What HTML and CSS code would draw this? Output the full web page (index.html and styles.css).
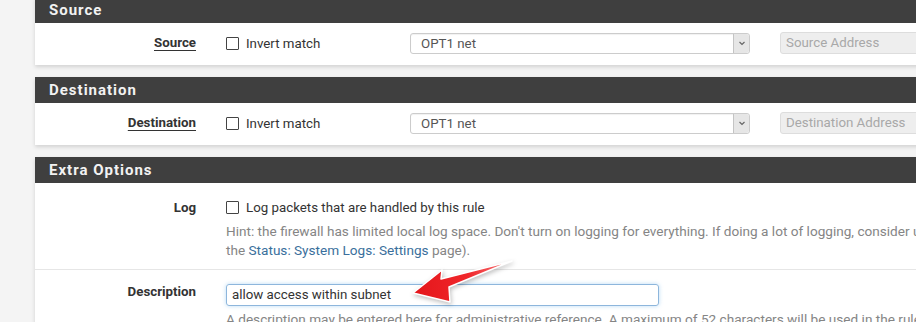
FILE: index.html
```html
<!doctype html>
<html>

<head>
    <meta charset="utf-8">
    <title>Edit Firewall Rule</title>
    <meta name="viewport" content="width=device-width,initial-scale=1">
    <link rel="stylesheet" href="styles.css">
</head>

<body>
    <div class="page">
        <div class="panel panel-first">
            <div class="panel-heading">Source</div>
            <div class="panel-body">
                <div class="row">
                    <div class="label"><span class="ul">Source</span></div>
                    <div class="field addr">
                        <label class="check"><span class="box"></span>Invert match</label>
                        <div class="select">
                            <span>OPT1 net</span>
                            <span class="caret">
                                <svg viewBox="0 0 10 10" aria-hidden="true"><path d="M2.5 4l2.5 2.5L7.5 4" /></svg>
                            </span>
                        </div>
                        <div class="input disabled">Source Address</div>
                    </div>
                </div>
            </div>
        </div>

        <div class="panel">
            <div class="panel-heading">Destination</div>
            <div class="panel-body">
                <div class="row">
                    <div class="label"><span class="ul">Destination</span></div>
                    <div class="field addr">
                        <label class="check"><span class="box"></span>Invert match</label>
                        <div class="select">
                            <span>OPT1 net</span>
                            <span class="caret">
                                <svg viewBox="0 0 10 10" aria-hidden="true"><path d="M2.5 4l2.5 2.5L7.5 4" /></svg>
                            </span>
                        </div>
                        <div class="input disabled">Destination Address</div>
                    </div>
                </div>
            </div>
        </div>

        <div class="panel">
            <div class="panel-heading">Extra Options</div>
            <div class="panel-body">
                <div class="row row-log">
                    <div class="label">Log</div>
                    <div class="field">
                        <label class="check"><span class="box"></span>Log packets that are handled by this rule</label>
                        <p class="help">Hint: the firewall has limited local log space. Don't turn on logging for everything. If doing a lot of logging, consider using a remote syslog server (see<br>the <a href="#">Status: System Logs: Settings</a> page).</p>
                    </div>
                </div>
                <div class="row row-desc">
                    <div class="label">Description</div>
                    <div class="field">
                        <div class="input focus">allow access within subnet</div>
                        <p class="help">A description may be entered here for administrative reference. A maximum of 52 characters will be used in the ruleset and displayed in the firewall log.</p>
                    </div>
                    <!-- annotation arrow drawn over the form -->
                    <svg class="arrow" viewBox="0 0 140 60" aria-hidden="true">
                        <defs>
                            <linearGradient id="red" x1="0" y1="0" x2="1" y2="0">
                                <stop offset="0" stop-color="#e4161b" />
                                <stop offset="0.55" stop-color="#f0262a" />
                                <stop offset="1" stop-color="#f77a7c" />
                            </linearGradient>
                        </defs>
                        <polygon points="23,41 52,18 51,27 122,9 59,35 60,50" fill="url(#red)" stroke="#fff" stroke-width="1.5" stroke-linejoin="round" />
                    </svg>
                </div>
            </div>
        </div>
    </div>
</body>

</html>
```

FILE: styles.css
```css
body {
    margin: 0;
    background: #f4f4f4;
    font-family: Roboto, "Liberation Sans", Arial, sans-serif;
    font-size: 13.3px;
    color: #333;
    overflow: hidden;
}

.page {
    padding-left: 35px;
    width: 1200px;
}

.panel {
    background: white;
    margin-bottom: 12px;
    box-shadow: 0 2px 4px rgba(0, 0, 0, 0.14);
}

.panel-first {
    margin-top: -3px;
}

.panel-heading {
    height: 26px;
    line-height: 26px;
    background: #3f3f3f;
    color: #f2f2f2;
    font-size: 15px;
    font-weight: bold;
    letter-spacing: 1px;
    padding-left: 14px;
}

.row {
    display: grid;
    grid-template-columns: 161px 1fr;
    column-gap: 30px;
    padding: 9px 0 11px;
}

.label {
    text-align: right;
    font-weight: bold;
    line-height: 21px;
}

.ul {
    text-decoration: underline;
    text-underline-offset: 3px;
}

.field.addr {
    display: flex;
    align-items: center;
}

.check {
    display: flex;
    align-items: center;
    gap: 7px;
    line-height: 19px;
}

.addr .check {
    width: 184px;
}

.box {
    width: 11px;
    height: 11px;
    border: 1px solid #444;
    background: white;
    border-radius: 1px;
}

.select {
    box-sizing: border-box;
    width: 340px;
    height: 21px;
    border: 1px solid #ccc;
    border-radius: 3px;
    display: flex;
    align-items: center;
    justify-content: space-between;
    padding-left: 10px;
    color: #555;
    box-shadow: inset 0 1px 1px rgba(0, 0, 0, 0.06);
}

.caret {
    width: 15px;
    height: 19px;
    background: #e6e6e6;
    border-left: 1px solid #c4c4c4;
    border-radius: 0 3px 3px 0;
    display: flex;
    align-items: center;
    justify-content: center;
}

.caret svg {
    width: 10px;
    height: 10px;
    fill: none;
    stroke: #666;
    stroke-width: 1.2;
}

.input {
    height: 20px;
    line-height: 20px;
    border: 1px solid #ccc;
    border-radius: 3px;
    padding-left: 5px;
    box-sizing: content-box;
}

.input.disabled {
    margin-left: 30px;
    width: 200px;
    background: #eee;
    border-color: #ddd;
    color: #a8a8a8;
}

.input.focus {
    width: 426px;
    border-color: #8db6dc;
    box-shadow: 0 0 4px rgba(102, 175, 233, 0.45);
    color: #333;
}

.help {
    margin: 5px 0 0;
    color: #858585;
    font-size: 13.6px;
    line-height: 19px;
    white-space: nowrap;
}

.help a {
    color: #3a6f9c;
    text-decoration: none;
}

.row-log {
    padding: 15px 0 9px;
    border-bottom: 1px solid #e6e6e6;
}

.row-log .label {
    line-height: 19px;
}

.row-desc {
    position: relative;
    padding-top: 14px;
}

.row-desc .label {
    line-height: 16px;
}

.row-desc .help {
    margin-top: 4px;
}

.arrow {
    position: absolute;
    left: 355px;
    top: -18px;
    width: 140px;
    height: 60px;
    filter: drop-shadow(1px 2px 2px rgba(0, 0, 0, 0.25));
}
```
